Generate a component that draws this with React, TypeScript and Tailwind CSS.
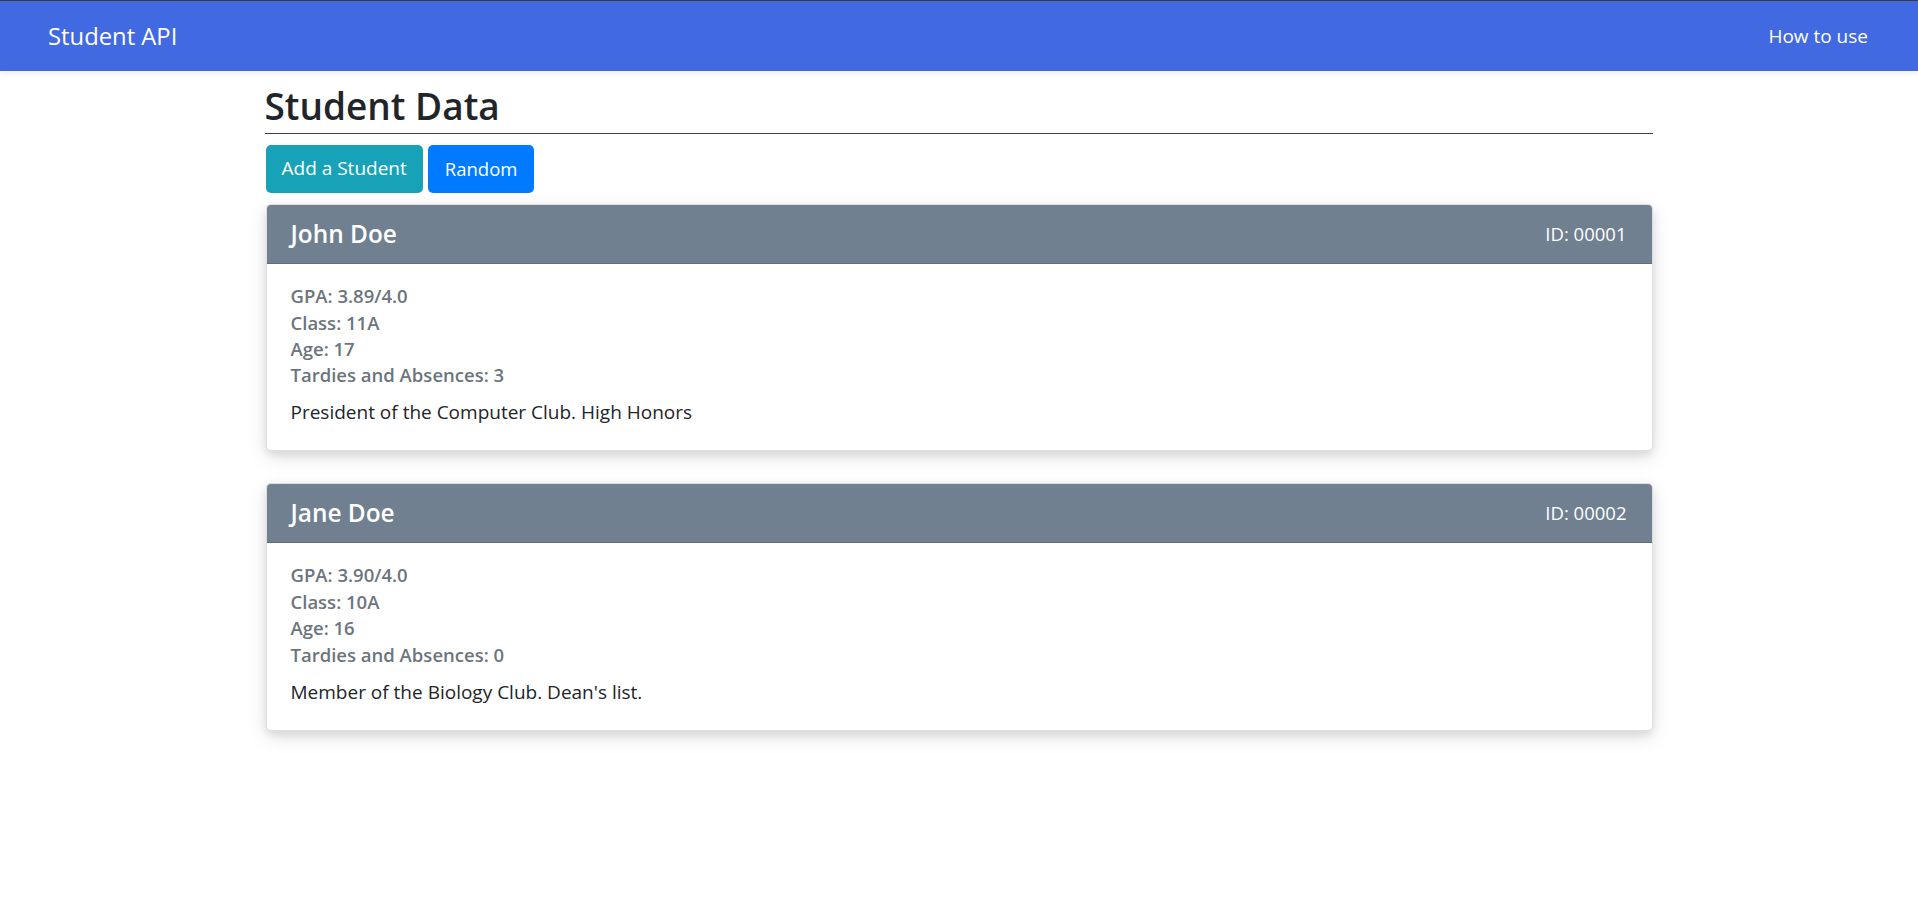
import React from 'react';

type Student = {
  id: string;
  name: string;
  gpa: string;
  className: string;
  age: number;
  tardies: number;
  note: string;
};

const STUDENTS: Student[] = [
  {
    id: '00001',
    name: 'John Doe',
    gpa: '3.89/4.0',
    className: '11A',
    age: 17,
    tardies: 3,
    note: 'President of the Computer Club. High Honors',
  },
  {
    id: '00002',
    name: 'Jane Doe',
    gpa: '3.90/4.0',
    className: '10A',
    age: 16,
    tardies: 0,
    note: "Member of the Biology Club. Dean's list.",
  },
];

const StudentCard = ({ student }: { student: Student }) => {
  return (
    <div className="bg-white border border-black/[0.125] rounded-[5px] overflow-hidden shadow-[0_4px_8px_0_rgba(0,0,0,0.09),0_6px_20px_0_rgba(0,0,0,0.11)]">
      <div className="h-[59px] bg-[#708090] border-b border-[#5e6d7b] flex items-center justify-between pl-[24px] pr-[25px] pt-[1px] text-white">
        <h4 className="text-[24.4px] leading-[30px] font-semibold">{student.name}</h4>
        <span className="text-[18.5px] leading-[28px]">ID: {student.id}</span>
      </div>
      <div className="pt-[19.5px] pb-[24.5px] pl-[24px] pr-[24px] text-[18.5px] leading-[26.4px]">
        <div className="text-[#6c757d] font-semibold">
          <div>GPA: {student.gpa}</div>
          <div>Class: {student.className}</div>
          <div>Age: {student.age}</div>
          <div>Tardies and Absences: {student.tardies}</div>
        </div>
        <p className="mt-[10.7px] text-[19px] text-[#212529]">{student.note}</p>
      </div>
    </div>
  );
};

export default function App() {
  return (
    <div className="min-h-[900px] bg-white font-['Open_Sans',sans-serif] text-[#212529]">
      <nav className="border-t border-[#3a3a3a] bg-[#4169e1] h-[71px] flex items-center justify-between pl-[48px] pr-[50px] text-white shadow-[0_2px_8px_rgba(0,0,0,0.08)] relative">
        <span className="text-[23.8px] leading-[35px]">Student API</span>
        <span className="text-[19px] leading-[28px]">How to use</span>
      </nav>

      <main className="w-[1387px] mx-auto pt-[12px]">
        <h1 className="text-[37px] leading-[45.6px] font-semibold pb-[4px] border-b border-[#3a3f44] -ml-[1px]">Student Data</h1>

        <div className="flex gap-[5px] mt-[11px]">
          <button className="h-[48px] px-[16px] rounded-[5px] bg-[#17a2b8] text-white text-[19px]">Add a Student</button>
          <button className="h-[48px] px-[17px] rounded-[5px] bg-[#007bff] text-white text-[18.5px]">Random</button>
        </div>

        <div className="mt-[11px] flex flex-col gap-[31.6px]">
          {STUDENTS.map((s) => (
            <StudentCard key={s.id} student={s} />
          ))}
        </div>
      </main>
    </div>
  );
}
